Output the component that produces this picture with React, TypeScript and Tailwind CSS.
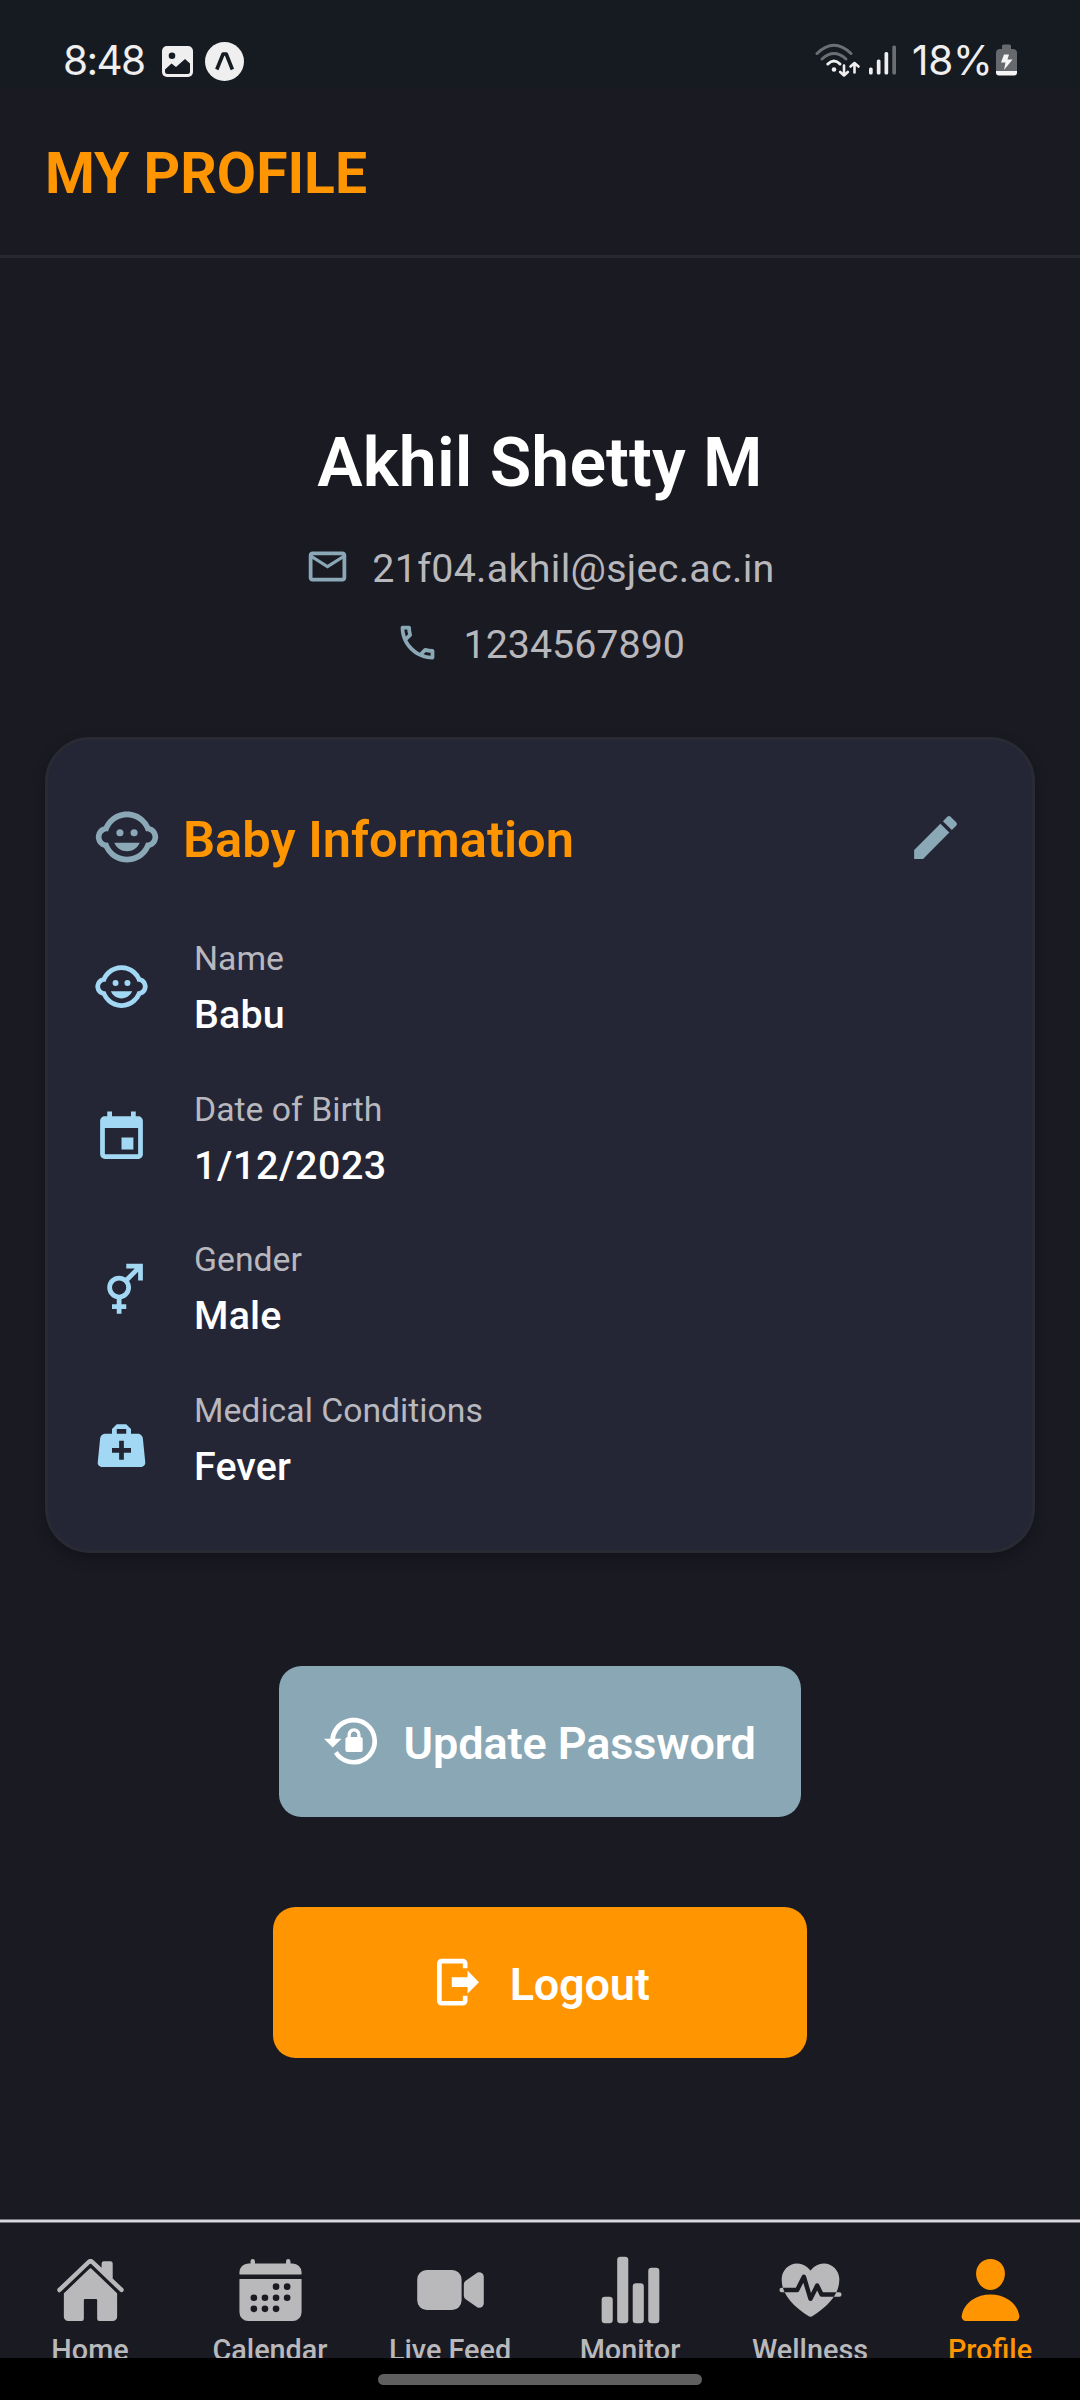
import type { ReactNode } from 'react';
import { IoCalendar, IoFitness, IoHome, IoPerson, IoStatsChart, IoVideocam } from 'react-icons/io5';
import { MdChildCare, MdEdit, MdEvent } from 'react-icons/md';

const PATHS = {
  email:
    'M22 6C22 4.9 21.1 4 20 4H4C2.9 4 2 4.9 2 6V18C2 19.1 2.9 20 4 20H20C21.1 20 22 19.1 22 18V6M20 6L12 11L4 6H20M20 18H4V8L12 13L20 8V18Z',
  phone:
    'M20,15.5C18.8,15.5 17.5,15.3 16.4,14.9C16.3,14.9 16.2,14.9 16.1,14.9C15.8,14.9 15.6,15 15.4,15.2L13.2,17.4C10.4,15.9 8,13.6 6.6,10.8L8.8,8.6C9.1,8.3 9.2,7.9 9,7.6C8.7,6.5 8.5,5.2 8.5,4C8.5,3.5 8,3 7.5,3H4C3.5,3 3,3.5 3,4C3,13.4 10.6,21 20,21C20.5,21 21,20.5 21,20V16.5C21,16 20.5,15.5 20,15.5M5,5H6.5C6.6,5.9 6.8,6.8 7,7.6L5.8,8.8C5.4,7.6 5.1,6.3 5,5M19,19C17.7,18.9 16.4,18.6 15.2,18.2L16.4,17C17.2,17.2 18.1,17.4 19,17.4V19Z',
  gender:
    'M17.58,4H14V2H21V9H19V5.41L15.17,9.24C15.69,10.03 16,11 16,12C16,14.42 14.28,16.44 12,16.9V19H14V21H12V23H10V21H8V19H10V16.9C7.72,16.44 6,14.42 6,12A5,5 0 0,1 11,7C12,7 12.96,7.3 13.75,7.83L17.58,4M11,9A3,3 0 0,0 8,12A3,3 0 0,0 11,15A3,3 0 0,0 14,12A3,3 0 0,0 11,9Z',
  medical:
    'M10,3L8,5V7H5C3.85,7 3.12,8 3,9L2,19C1.88,20 2.54,21 4,21H20C21.46,21 22.12,20 22,19L21,9C20.88,8 20.06,7 19,7H16V5L14,3H10M10,5H14V7H10V5M11,10H13V13H16V15H13V18H11V15H8V13H11V10Z',
  lockReset:
    'M12.63,2C18.16,2 22.64,6.5 22.64,12C22.64,17.5 18.16,22 12.63,22C9.12,22 6.05,20.18 4.26,17.43L5.84,16.18C7.25,18.47 9.76,20 12.64,20A8,8 0 0,0 20.64,12A8,8 0 0,0 12.64,4C8.56,4 5.2,7.06 4.71,11H7.47L3.73,14.73L0,11H2.69C3.19,5.95 7.45,2 12.63,2M15.59,10.24C16.09,10.25 16.5,10.65 16.5,11.16V15.77C16.5,16.27 16.09,16.69 15.58,16.69H10.05C9.54,16.69 9.13,16.27 9.13,15.77V11.16C9.13,10.65 9.54,10.25 10.04,10.24V9.23C10.04,7.7 11.29,6.46 12.81,6.46C14.34,6.46 15.59,7.7 15.59,9.23V10.24M12.81,7.86C12.06,7.86 11.44,8.47 11.44,9.23V10.24H14.19V9.23C14.19,8.47 13.57,7.86 12.81,7.86Z',
  logout:
    'M5,2H14A2,2 0 0,1 16,4V6.1H14V4H5V20H14V17.8H16V20A2,2 0 0,1 14,22H5A2,2 0 0,1 3,20V4A2,2 0 0,1 5,2M16,7L20.9,12L16,17V14.1H9.3V9.9H16V7Z',
};

function Glyph({ name, className }: { name: keyof typeof PATHS; className: string }) {
  return (
    <svg viewBox="0 0 24 24" fill="currentColor" className={`shrink-0 ${className}`}>
      <path fillRule="evenodd" d={PATHS[name]} />
    </svg>
  );
}

function StatusBar() {
  return (
    <div className="flex h-[88px] items-center justify-between bg-[#161b22] pt-8 pr-[63px] pl-[63px] font-[Inter,sans-serif] text-[40.5px] leading-none text-[#efeff0]">
      <div className="flex items-center">
        <span className="mt-[2px] w-[99px] tracking-[-1.6px]">8:48</span>
        <svg viewBox="0 0 31 31" className="mt-[3px] h-[31px] w-[31px]">
          <rect width="31" height="31" rx="5" fill="#efeff0" />
          <circle cx="10" cy="9.8" r="3.3" fill="#161b22" />
          <path d="M3 23.5L9.5 17.5L14 21L23 13L28 17.5V25.5Q28 28 25.5 28H5.500Q3 28 3 25.500Z" fill="#161b22" />
        </svg>
        <svg viewBox="0 0 39 39" className="mt-[3px] ml-3 h-[39px] w-[39px]">
          <circle cx="19.500" cy="19.500" r="19.500" fill="#efeff0" />
          <path d="M11.800 27.500L18.100 12H21.200L27.400 27.500" fill="none" stroke="#161b22" strokeWidth="3.600" strokeLinejoin="round" />
        </svg>
      </div>
      <div className="flex items-center">
        <svg viewBox="0 0 47 34" className="h-[34px] w-[47px]" fill="none" strokeLinecap="round" strokeLinejoin="round">
          <path d="M2 10.500Q19 -6 36 10.500" stroke="#6b6f74" strokeWidth="3" />
          <path d="M7 16Q19 5 31 16" stroke="#6b6f74" strokeWidth="3" />
          <path d="M12.800 21Q19 15 25 21" stroke="#efeff0" strokeWidth="3" />
          <circle cx="19" cy="26.500" r="2.300" fill="#efeff0" />
          <path d="M29 22.500V32.500M25.200 29L29 32.500L32.800 29" stroke="#efeff0" strokeWidth="2.600" />
          <path d="M39.500 29.500V20M35.500 23.500L39.500 20L43.500 23.500" stroke="#efeff0" strokeWidth="2.600" />
        </svg>
        <svg viewBox="0 0 28 30" className="ml-[7px] h-[30px] w-[28px]" fill="#efeff0">
          <rect x="0" y="22.500" width="3.700" height="7" rx="1.500" />
          <rect x="7.800" y="14.500" width="3.700" height="15" rx="1.500" />
          <rect x="15.500" y="7" width="3.700" height="22.500" rx="1.500" />
          <rect x="23.300" y="0.500" width="3.700" height="29" rx="1.500" fill="#6b6f74" />
        </svg>
        <span className="mt-[2px] ml-[15px] w-[84px] tracking-[-0.3px]">18%</span>
        <svg viewBox="0 0 21 32" className="h-8 w-[21px]">
          <path d="M6 2Q6 0.500 7.500 0.500H13.500Q15 0.500 15 2V5H17.500Q21 5.500 21 9V27H0V9Q0 5.500 3.500 5H6Z" fill="#66696e" />
          <path d="M0 27H21V28.500Q21 31.500 18 31.500H3Q0 31.500 0 28.500Z" fill="#f5f5f5" />
          <path d="M8 10.500H13L11.500 15.500H16.500L8 26L9.500 18.500H5Z" fill="#f5f5f5" />
        </svg>
      </div>
    </div>
  );
}

function InfoRow({ icon, label, value, spacing }: { icon: ReactNode; label: string; value: string; spacing: string }) {
  return (
    <div className="flex h-[150.5px] items-start">
      <div className="h-[57px] w-[56px] shrink-0 text-[#a3d8f4]">{icon}</div>
      <div className="ml-[45px]">
        <p className="mb-[6px] text-[33.75px] leading-[45px] text-[#b8b8be]">{label}</p>
        <p className={`text-[39.4px] leading-[56px] font-medium text-white ${spacing}`}>{value}</p>
      </div>
    </div>
  );
}

const TABS = [
  { label: 'Home', Icon: IoHome },
  { label: 'Calendar', Icon: IoCalendar },
  { label: 'Live Feed', Icon: IoVideocam },
  { label: 'Monitor', Icon: IoStatsChart },
  { label: 'Wellness', Icon: IoFitness },
  { label: 'Profile', Icon: IoPerson, active: true },
];

export default function App() {
  return (
    <div className="flex h-[2400px] w-[1080px] flex-col overflow-hidden bg-[#1a1a23] font-[Roboto,sans-serif]">
      <StatusBar />
      <header className="flex h-[170px] items-center border-b-[3px] border-[#282830] pt-1 pl-[45px]">
        <h1 className="text-[57px] leading-none font-bold text-[#ff9500]">MY PROFILE</h1>
      </header>

      <main className="flex flex-col items-center">
        <h2 className="mt-[165px] text-[68px] leading-[80px] font-semibold tracking-[0.150px] text-white">Akhil Shetty M</h2>
        <div className="mt-10 flex h-[46px] items-center gap-[22px]">
          <Glyph name="email" className="h-[45px] w-[45px] text-[#8ba8b7]" />
          <span className="mt-[5px] text-[39.4px] leading-[46px] tracking-[0.3px] text-[#b8b8bc]">21f04.akhil@sjec.ac.in</span>
        </div>
        <div className="mt-[30px] flex h-[46px] items-center gap-[23.5px]">
          <Glyph name="phone" className="h-[45px] w-[45px] text-[#8ba8b7]" />
          <span className="mt-[5px] text-[39.4px] leading-[46px] text-[#b8b8bc]">1234567890</span>
        </div>

        <section className="mt-[72px] h-[816px] w-[990px] rounded-[45px] border-[3px] border-[#2a2a34] bg-[#252635] pl-[45px] shadow-[0_6px_14px_rgba(0,0,0,0.28)]">
          <div className="mt-[63px] flex h-[68px] items-center pr-[23px]">
            <MdChildCare className="h-[68px] w-[68px] text-[#8ba8b7]" />
            <h3 className="mt-[5px] ml-[22px] grow text-[50.6px] leading-[60px] font-semibold text-[#ff9500]">Baby Information</h3>
            <MdEdit className="mr-[45px] h-[57px] w-[57px] text-[#8ba8b7]" />
          </div>
          <div className="mt-[65px]">
            <InfoRow icon={<MdChildCare className="mt-[22px] h-[57px] w-[57px]" />} label="Name" value="Babu" spacing="tracking-[0.2px]" />
            <InfoRow icon={<MdEvent className="mt-[22px] h-[57px] w-[57px]" />} label="Date of Birth" value="1/12/2023" spacing="tracking-[0.6px]" />
            <InfoRow icon={<Glyph name="gender" className="mt-[22px] h-[57px] w-[57px]" />} label="Gender" value="Male" spacing="tracking-[0.2px]" />
            <InfoRow icon={<Glyph name="medical" className="mt-[29px] h-[57px] w-[57px]" />} label="Medical Conditions" value="Fever" spacing="tracking-[0.1px]" />
          </div>
        </section>

        <button className="mt-[113px] flex h-[151px] w-[522px] items-center justify-center gap-[23px] rounded-[22.5px] bg-[#8aa7b6] text-white">
          <Glyph name="lockReset" className="h-[56.25px] w-[56.25px]" />
          <span className="mt-1 text-[45px] leading-none font-semibold tracking-[-0.1px]">Update Password</span>
        </button>
        <button className="mt-[90px] flex h-[151px] w-[534px] items-center justify-center gap-[23px] rounded-[22.5px] bg-[#ff9500] text-white">
          <Glyph name="logout" className="h-[56.25px] w-[56.25px]" />
          <span className="mt-1 text-[45px] leading-none font-semibold tracking-[-0.2px]">Logout</span>
        </button>
      </main>

      <nav className="mt-[161px] h-[139px] shrink-0 overflow-hidden border-t border-[#77767f]">
        <div className="h-[3px] border-b border-[#77767f] bg-[#d9d8df]" />
        <div className="grid grid-cols-6 pt-[30.5px]">
          {TABS.map(({ label, Icon, active }) => (
            <div key={label} className={`flex flex-col items-center ${active ? 'text-[#ff9500]' : 'text-[#b9b9bc]'}`}>
              <Icon className="h-[72px] w-[71px]" />
              <span className="mt-[7.5px] text-[28.8px] leading-[34px] font-medium whitespace-nowrap">{label}</span>
            </div>
          ))}
        </div>
      </nav>
      <div className="flex h-[42px] shrink-0 justify-center bg-black pt-4">
        <div className="h-[11px] w-[324px] rounded-full bg-[#5f5f5f]" />
      </div>
    </div>
  );
}
